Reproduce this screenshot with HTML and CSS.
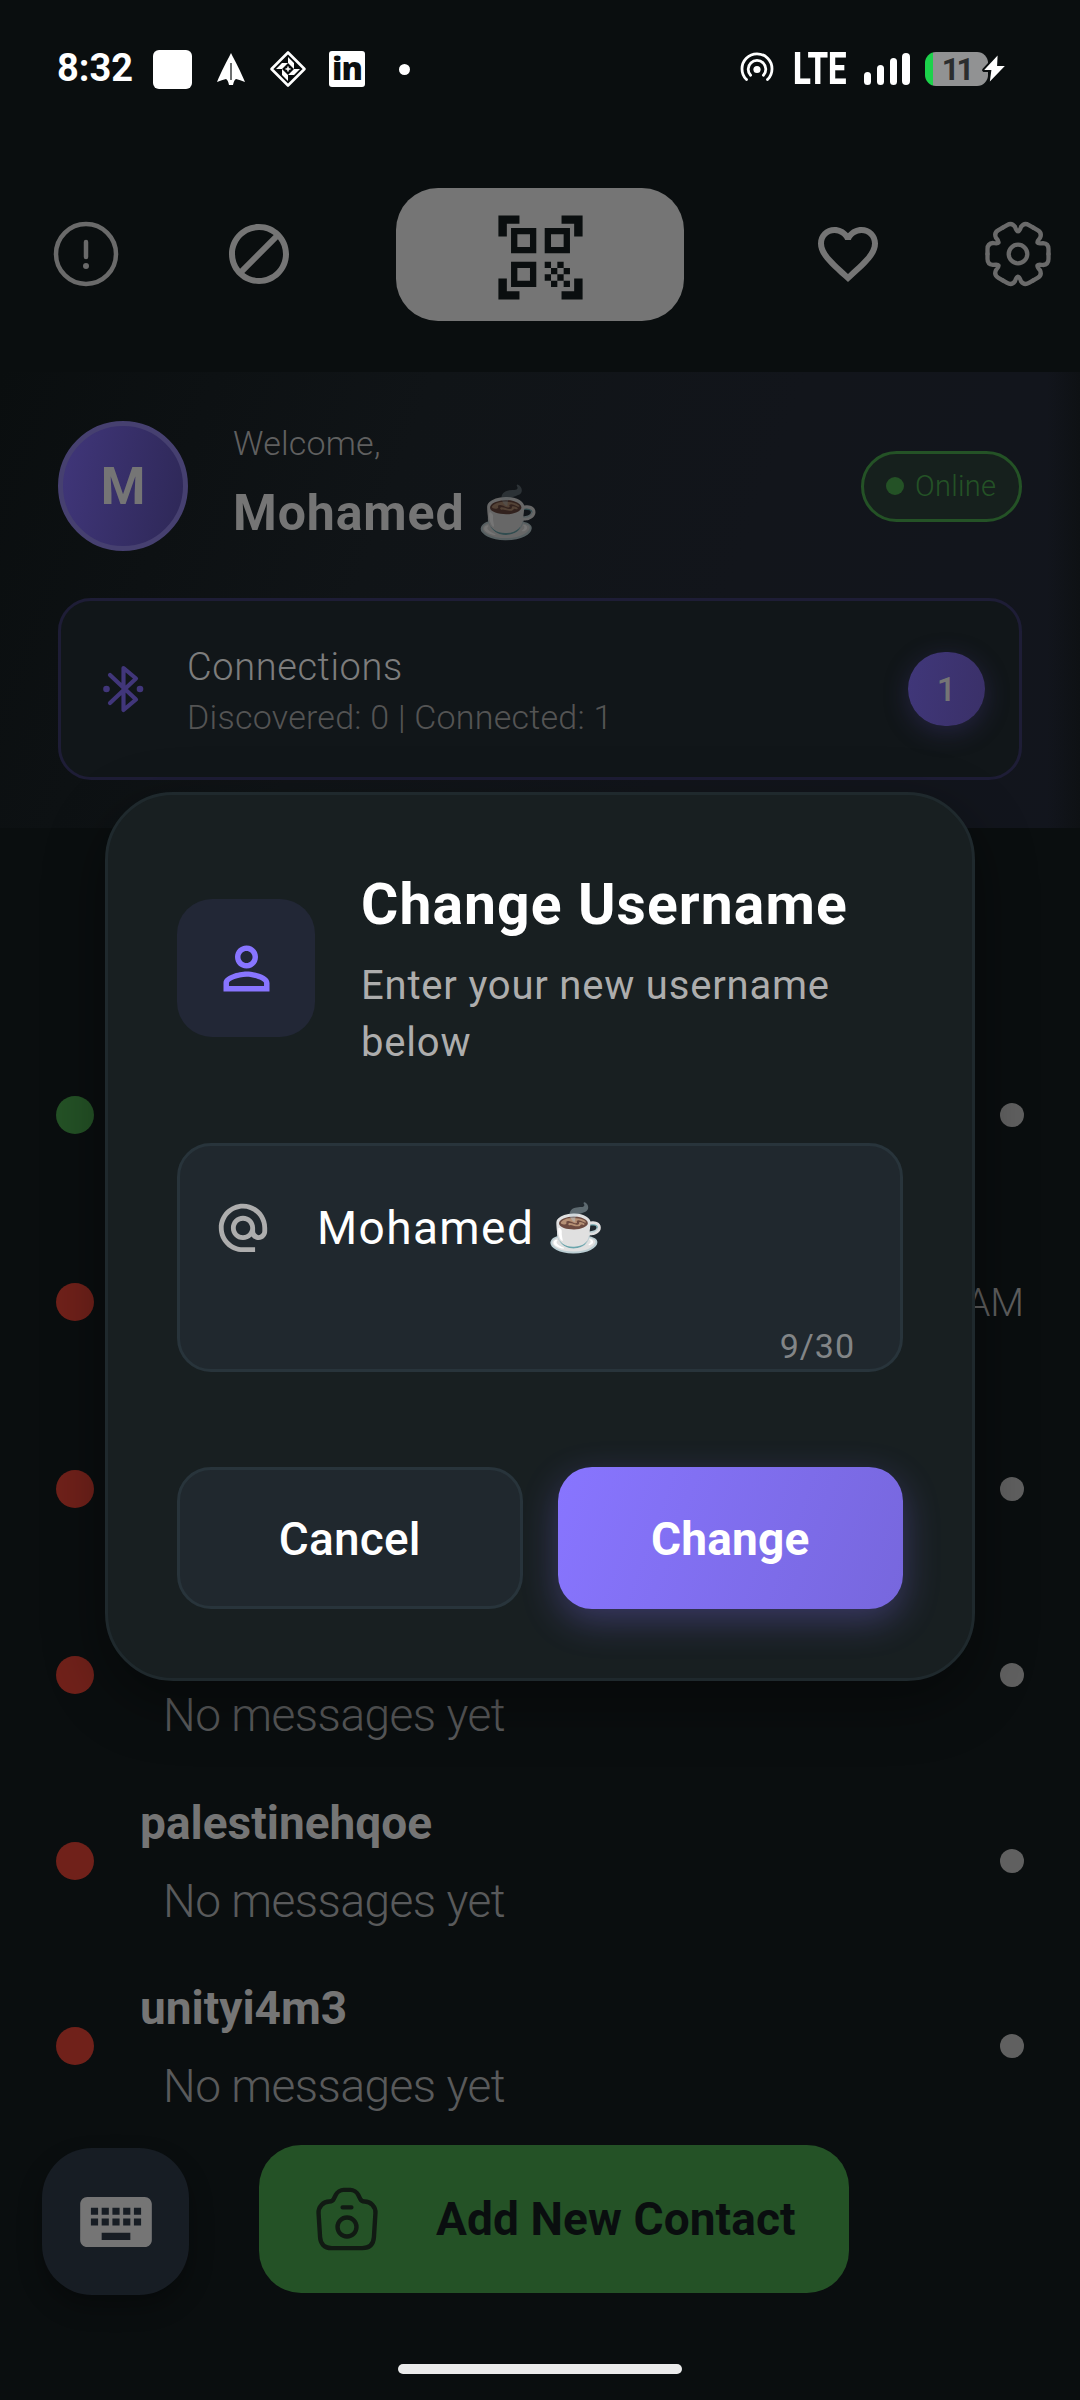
FILE: index.html
```html
<!DOCTYPE html>
<html lang="en">
<head>
<meta charset="utf-8">
<title>Change Username</title>
<link rel="stylesheet" href="styles.css">
</head>
<body>
<div class="screen">
  <div class="status">
    <span class="clock">8:32</span>
    <span class="app-square"></span>
    <svg class="ic-plane" viewBox="0 0 30 34"><path d="M15 1C19 9 25 20 29 30Q24 28 20 27Q18 28 17 33H13Q12 28 10 27Q6 28 1 30C5 20 11 9 15 1Z" fill="#fff"/><path d="M15 11V28" stroke="#0a0e0f" stroke-width="1.2"/></svg>
    <svg class="ic-diamond" viewBox="0 0 38 38"><path d="M19 2.500L35.500 19L19 35.500L2.500 19Z" fill="none" stroke="#fff" stroke-width="2.600" stroke-linejoin="round"/><path d="M19 7L25 13H19ZM31 19L25 25V19ZM19 31L13 25H19ZM7 19L13 13V19ZM13 13H19L13 19ZM25 13V19L19 13ZM25 25H19L25 19ZM13 25V19L19 25Z" fill="#fff"/><path d="M19 14.500L23.500 19L19 23.500L14.500 19Z" fill="#0a0e0f"/><path d="M19 16.500V21.500M16.500 19H21.500" stroke="#fff" stroke-width="1.500"/></svg>
    <span class="linkedin">in</span>
    <span class="more-dot"></span>
    <span class="grow"></span>
    <svg class="ic-hotspot" viewBox="0 0 34 30"><g fill="none" stroke="#fff" stroke-width="2.800" stroke-linecap="round"><path d="M6.500 27.500A15 15 0 1 1 27.500 27.500"/><path d="M10.600 23.200A8.800 8.800 0 1 1 23.400 23.200"/></g><circle cx="17" cy="17.500" r="3.600" fill="#fff"/></svg>
    <span class="lte"><span>LTE</span></span>
    <span class="signal"><i class="b1"></i><i class="b2"></i><i class="b3"></i><i class="b4"></i></span>
    <span class="battery"><span class="pct">11</span><svg class="bolt" viewBox="0 0 26 30"><path d="M16 2.500L3 16.500H10L8.500 27.500L23 12.500H15.500Z" fill="#fff" stroke="#0a0e0f" stroke-width="4" stroke-linejoin="round" paint-order="stroke"/></svg></span>
  </div>

  <div class="toolbar">
    <svg class="tool" viewBox="0 0 24 24"><g fill="none" stroke="#6a6a6a" stroke-width="1.500" stroke-linecap="round"><circle cx="12" cy="12" r="10"/><path d="M12 8v5"/><path d="M11.995 16h.009" stroke-width="2"/></g></svg>
    <svg class="tool block" viewBox="0 0 24 24" fill="#757575"><path d="M12 2C6.480 2 2 6.480 2 12s4.480 10 10 10 10-4.480 10-10S17.520 2 12 2zM4 12c0-4.420 3.580-8 8-8 1.850 0 3.550.63 4.900 1.690L5.690 16.900C4.630 15.550 4 13.850 4 12zm8 8c-1.850 0-3.550-.63-4.900-1.690L18.310 7.100C19.370 8.450 20 10.150 20 12c0 4.420-3.580 8-8 8z"/></svg>
    <div class="qr"><svg viewBox="0 0 24 24" fill="#0a0e0f"><path d="M9.500 6.500v3h-3v-3h3M11 5H5v6h6V5zm-1.500 9.500v3h-3v-3h3M11 13H5v6h6v-6zm6.500-6.500v3h-3v-3h3M19 5h-6v6h6V5zm-6 8h1.500v1.500H13V13zm1.500 1.500H16V16h-1.500v-1.500zM16 13h1.500v1.500H16V13zm-3 3h1.500v1.500H13V16zm1.500 1.500H16V19h-1.500v-1.500zM16 16h1.500v1.500H16V16zm1.500-1.500H19V16h-1.500v-1.500zm0 3H19V19h-1.500v-1.500zM22 7h-2V4h-3V2h5v5zm0 15v-5h-2v3h-3v2h5zM2 22h5v-2H4v-3H2v5zM2 2v5h2V4h3V2H2z"/></svg></div>
    <svg class="tool heart" viewBox="0 0 24 24" fill="#757575"><path d="M16.500 3c-1.740 0-3.410.81-4.500 2.090C10.910 3.810 9.240 3 7.500 3 4.420 3 2 5.420 2 8.500c0 3.780 3.400 6.860 8.550 11.540L12 21.350l1.450-1.320C18.600 15.360 22 12.280 22 8.500 22 5.420 19.580 3 16.500 3zm-4.400 15.550l-.1.100-.1-.1C7.140 14.240 4 11.390 4 8.500 4 6.500 5.500 5 7.500 5c1.540 0 3.040.99 3.570 2.360h1.870C13.460 5.990 14.960 5 16.500 5c2 0 3.500 1.500 3.500 3.500 0 2.890-3.140 5.740-7.900 10.050z"/></svg>
    <svg class="tool gear" viewBox="-36 -36 72 72" fill="none" stroke="#6a6a6a" stroke-width="4.300" stroke-linecap="round"><defs><path id="tooth" d="M30.500 0V5Q30.500 10.500 25 11Q15.500 9 22 16.200Q24.300 21.200 19.600 23.900L15.250 26.400"/></defs><use href="#tooth"/><use href="#tooth" transform="rotate(60)"/><use href="#tooth" transform="rotate(120)"/><use href="#tooth" transform="rotate(180)"/><use href="#tooth" transform="rotate(240)"/><use href="#tooth" transform="rotate(300)"/><circle r="9.300"/></svg>
  </div>

  <div class="profile">
    <div class="who">
      <div class="avatar">M</div>
      <div class="greet">
        <div class="welcome">Welcome,</div>
        <div class="name">Mohamed <span class="cup">☕</span></div>
      </div>
      <div class="online"><i></i><span>Online</span></div>
    </div>
    <div class="conn">
      <svg class="bt" viewBox="0 0 44 48" fill="none" stroke="#41367a" stroke-width="4.200" stroke-linecap="round" stroke-linejoin="round"><path d="M9 10L35 34.500L22.500 45V3L35 13.500L9 38"/><g fill="#41367a" stroke="none"><circle cx="5.500" cy="24" r="3.300"/><circle cx="39" cy="24" r="3.300"/></g></svg>
      <div class="conn-text"><div class="conn-title">Connections</div><div class="conn-sub">Discovered: 0 | Connected: 1</div></div>
      <div class="count">1</div>
    </div>
  </div>

  <div class="list">
    <div class="row"><i class="state on"></i><div class="msg"></div><i class="dot"></i></div>
    <div class="row r2"><i class="state"></i><div class="msg"></div><span class="time">AM</span></div>
    <div class="row r3"><i class="state"></i><div class="msg"></div><i class="dot"></i></div>
    <div class="row"><i class="state"></i><div class="msg"><div class="contact"></div><div class="last">No messages yet</div></div><i class="dot"></i></div>
    <div class="row"><i class="state"></i><div class="msg"><div class="contact">palestinehqoe</div><div class="last">No messages yet</div></div><i class="dot"></i></div>
    <div class="row"><i class="state"></i><div class="msg"><div class="contact">unityi4m3</div><div class="last">No messages yet</div></div><i class="dot"></i></div>
  </div>

  <div class="bottom">
    <div class="kbd"><svg viewBox="0 0 24 24" fill="#757575"><path d="M20 5H4c-1.100 0-1.990.9-1.990 2L2 17c0 1.100.9 2 2 2h16c1.100 0 2-.9 2-2V7c0-1.100-.9-2-2-2zm-9 3h2v2h-2V8zm0 3h2v2h-2v-2zM8 8h2v2H8V8zm0 3h2v2H8v-2zm-1 2H5v-2h2v2zm0-3H5V8h2v2zm9 7H8v-2h8v2zm0-4h-2v-2h2v2zm0-3h-2V8h2v2zm3 3h-2v-2h2v2zm0-3h-2V8h2v2z"/></svg></div>
    <div class="add"><svg viewBox="0 0 24 24" fill="none" stroke="#111a13" stroke-width="1.500" stroke-linecap="round" stroke-linejoin="round"><path d="M6.760 22h10.480c2.760 0 3.860-1.690 3.990-3.750l.52-8.260A3.753 3.753 0 0 0 18 6c-.61 0-1.170-.35-1.450-.89l-.72-1.450C15.370 2.750 14.170 2 13.150 2h-2.290c-1.030 0-2.230.75-2.690 1.660l-.72 1.450C7.170 5.650 6.610 6 6 6a3.753 3.753 0 0 0-3.750 3.990l.52 8.260C2.890 20.310 4 22 6.760 22zM10.500 8h3M12 18c1.790 0 3.250-1.460 3.250-3.250S13.790 11.500 12 11.500s-3.250 1.460-3.250 3.250S10.210 18 12 18z"/></svg><span>Add New Contact</span></div>
  </div>
  <div class="home"></div>

  <div class="modal">
    <div class="head">
      <div class="user"><svg viewBox="0 0 24 24" fill="#8875ff"><path d="M12 5.900c1.160 0 2.100.94 2.100 2.100s-.94 2.100-2.100 2.100S9.900 9.160 9.900 8s.94-2.100 2.100-2.100m0 9c2.970 0 6.100 1.460 6.100 2.100v1.100H5.900V17c0-.64 3.130-2.100 6.100-2.100M12 4C9.790 4 8 5.790 8 8s1.790 4 4 4 4-1.790 4-4-1.790-4-4-4zm0 9c-2.670 0-8 1.340-8 4v3h16v-3c0-2.660-5.330-4-8-4z"/></svg></div>
      <div class="titles"><div class="title">Change Username</div><div class="sub">Enter your new username<br>below</div></div>
    </div>
    <div class="field">
      <div class="value"><svg viewBox="0 0 24 24" fill="#adadad"><path d="M12 1.950c-5.520 0-10 4.480-10 10s4.480 10 10 10h5v-2h-5c-4.340 0-8-3.660-8-8s3.660-8 8-8 8 3.660 8 8v1.430c0 .79-.71 1.570-1.500 1.570s-1.500-.78-1.500-1.570v-1.430c0-2.760-2.240-5-5-5s-5 2.240-5 5 2.240 5 5 5c1.380 0 2.640-.56 3.540-1.470.65.89 1.770 1.470 2.960 1.470 1.970 0 3.500-1.600 3.500-3.570v-1.430c0-5.520-4.480-10-10-10zm0 13c-1.660 0-3-1.340-3-3s1.340-3 3-3 3 1.340 3 3-1.340 3-3 3z"/></svg><div>Mohamed ☕</div></div>
      <div class="counter">9/30</div>
    </div>
    <div class="actions"><div class="btn cancel">Cancel</div><div class="btn change">Change</div></div>
  </div>
</div>
</body>
</html>
```
FILE: styles.css
```css
* { box-sizing: border-box; }
body { margin: 0; background: #0a0e0f; font-family: Roboto, "Noto Color Emoji", sans-serif; }
svg { display: block; flex: none; }
i { display: block; flex: none; }
.screen { position: relative; width: 1080px; height: 2400px; overflow: hidden; display: flex; flex-direction: column; background: #0a0e0f; }
.screen > div { flex: none; }

.status { height: 138px; display: flex; align-items: center; color: #fff; padding: 0 75px 0 57px; }
.grow { flex: 1; }
.clock { font-size: 38px; font-weight: 700; line-height: 44px; width: 96px; margin-top: -3px; }
.app-square { width: 39px; height: 39px; border-radius: 6px; background: #fff; }
.ic-plane { width: 30px; height: 34px; margin-left: 24px; }
.ic-diamond { width: 38px; height: 38px; margin-left: 23px; }
.linkedin { width: 36px; height: 36px; margin-left: 22px; border-radius: 3px; background: #fff; color: #0a0e0f; font: 800 32px/34px "Open Sans", sans-serif; text-align: center; letter-spacing: -1px; }
.more-dot { width: 11px; height: 11px; margin-left: 34px; border-radius: 50%; background: #fff; }
.ic-hotspot { width: 34px; height: 30px; margin-top: -4px; }
.lte { margin-left: 19px; width: 71px; }
.lte span { display: block; width: 80px; font-size: 44px; font-weight: 800; line-height: 44px; transform: scaleX(.75); transform-origin: 0 50%; }
.signal { display: flex; gap: 5.500px; align-items: flex-end; height: 32px; width: 61px; }
.signal i { width: 7.300px; border-radius: 4px; background: #fff; }
.b1 { height: 13px; }
.b2 { height: 20px; }
.b3 { height: 27px; }
.b4 { height: 32px; }
.battery { position: relative; width: 80px; height: 34px; }
.pct { display: block; width: 63px; height: 34px; border-radius: 11px; background: linear-gradient(90deg, #1cd24b 8px, #919293 8px); color: #2b2d2e; font-size: 31px; font-weight: 700; letter-spacing: -3px; line-height: 35px; text-align: center; }
.bolt { position: absolute; left: 56px; top: 1px; width: 27px; height: 31px; }

.toolbar { height: 234px; display: flex; align-items: flex-start; padding: 50px 0 0 50px; }
.tool { width: 72px; height: 72px; margin-top: 30px; }
.block { margin-left: 101px; }
.heart { margin-left: 128px; }
.gear { margin-left: 98px; }
.qr { width: 288px; height: 133px; margin-left: 101px; border-radius: 42px; background: #757575; display: flex; justify-content: center; padding-top: 19px; }
.qr svg { width: 101px; height: 101px; }

.profile { height: 456px; padding: 49px 58px 0; background: linear-gradient(90deg, transparent 97%, #0e1114 100%), linear-gradient(110deg, #0a0e0f 0%, #101417 35%, #12151b 65%, #12151d 100%); }
.who { display: flex; align-items: center; height: 130px; }
.avatar { width: 130px; height: 130px; border-radius: 50%; border: 5px solid #464070; background: linear-gradient(100deg, #40367a, #2e2857); color: #757575; font-size: 51px; font-weight: 700; line-height: 121px; text-align: center; }
.greet { flex: 1; margin-left: 45px; }
.welcome { font-size: 34px; font-weight: 300; letter-spacing: .2px; line-height: 42px; color: #606060; margin-top: -7px; }
.name { font-size: 50px; font-weight: 700; letter-spacing: .9px; line-height: 60px; color: #757575; margin-top: 19px; }
.cup { filter: brightness(.46); }
.online { width: 161px; height: 71px; border: 3px solid #245226; border-radius: 36px; background: #16201d; color: #245226; display: flex; align-items: center; gap: 11px; padding-left: 22px; font-size: 29px; font-weight: 300; letter-spacing: .3px; }
.online i { width: 18px; height: 18px; border-radius: 50%; background: #245226; }
.conn { height: 182px; margin-top: 47px; border: 3px solid #1e1d36; border-radius: 33px; background: #111619; display: flex; align-items: center; padding: 0 34px 0 40px; }
.bt { width: 44px; height: 48px; }
.conn-text { flex: 1; margin-left: 42px; padding-top: 6px; }
.conn-title { font-size: 38px; font-weight: 300; letter-spacing: .6px; line-height: 50px; color: #7d7d7d; }
.conn-sub { font-size: 34px; font-weight: 300; letter-spacing: .25px; line-height: 50px; color: #545454; }
.count { width: 77px; height: 74px; border-radius: 37px; background: linear-gradient(100deg, #40377a, #3a3068); box-shadow: 0 6px 24px rgba(64,54,122,.4); color: #757575; font-size: 34px; font-weight: 500; line-height: 75px; text-align: center; }

.list { height: 1312px; padding: 194px 56px 0; }
.row { height: 185.500px; display: flex; align-items: center; }
.r2 { height: 188px; }
.r3 { height: 187px; }
.state { width: 38px; height: 38px; border-radius: 50%; background: #70211a; }
.state.on { background: #245226; }
.msg { flex: 1; padding: 2px 0 0 46px; }
.contact { height: 60px; font-size: 46px; font-weight: 700; line-height: 60px; color: #757575; }
.last { margin-top: 18px; padding-left: 23px; font-size: 46px; font-weight: 300; letter-spacing: -.5px; line-height: 60px; color: #595a5b; }
.dot { width: 24px; height: 24px; border-radius: 50%; background: #606060; }
.time { padding-top: 3px; font-size: 39px; font-weight: 300; color: #5f5f5f; }

.bottom { height: 206px; display: flex; align-items: flex-start; padding: 5px 0 0 42px; }
.kbd { width: 147px; height: 147px; margin-top: 3px; border-radius: 50px; background: #171d24; box-shadow: 0 12px 24px rgba(0,0,0,.3); display: flex; align-items: center; justify-content: center; }
.kbd svg { width: 86px; height: 86px; }
.add { width: 590px; height: 148px; margin-left: 70px; border-radius: 42px; background: #245226; color: #0a0e0f; display: flex; align-items: center; padding-left: 53px; font-size: 46px; font-weight: 700; letter-spacing: .1px; }
.add svg { width: 70px; height: 70px; margin-right: 54px; }
.home { width: 284px; height: 10px; margin: 18px auto 0; border-radius: 5px; background: #ebebeb; }

.modal { position: absolute; left: 105px; top: 792px; width: 870px; height: 889px; border: 3px solid #1f292d; border-radius: 68px; background: #181f21; box-shadow: 0 20px 60px rgba(0,0,0,.4); padding: 70px 69px 0; }
.head { display: flex; align-items: center; height: 206px; }
.user { width: 138px; height: 138px; border-radius: 35px; background: #222736; display: flex; align-items: center; justify-content: center; }
.user svg { width: 69px; height: 69px; }
.titles { margin-left: 46px; padding-top: 6px; white-space: nowrap; }
.title { font-size: 57px; font-weight: 700; letter-spacing: 1.100px; line-height: 68px; color: #fff; margin-bottom: 18px; }
.sub { font-size: 40px; letter-spacing: .8px; line-height: 57px; color: #adadad; }
.field { height: 229px; margin-top: 72px; border: 3px solid #28343b; border-radius: 34px; background: #20282e; padding: 53px 45px 0 34px; }
.value { display: flex; height: 58px; gap: 45px; color: #fff; font-size: 46px; letter-spacing: 1.400px; line-height: 58px; }
.value svg { width: 58px; height: 58px; }
.counter { margin-top: 68px; font-size: 34px; letter-spacing: 1px; line-height: 42px; color: #828587; text-align: right; }
.actions { display: grid; grid-template-columns: 1fr 1fr; gap: 35px; margin-top: 95px; }
.btn { height: 142px; padding-top: 1px; border-radius: 34px; color: #fff; font-size: 46px; font-weight: 500; letter-spacing: .2px; display: flex; align-items: center; justify-content: center; }
.cancel { border: 3px solid #28343b; background: #20282e; }
.change { font-weight: 700; background: linear-gradient(110deg, #8875ff, #7767dd); box-shadow: 0 12px 36px rgba(136,117,255,.3); }
```
